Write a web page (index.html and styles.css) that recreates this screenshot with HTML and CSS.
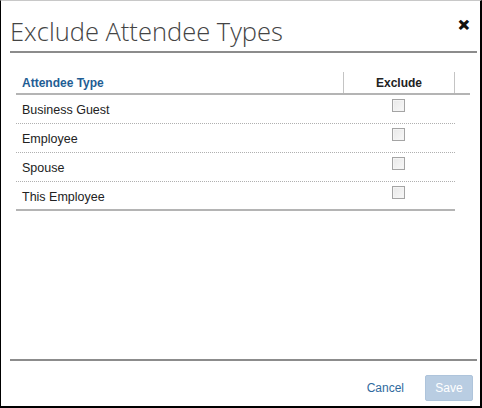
FILE: index.html
```html
<!DOCTYPE html>
<html>
<head>
<meta charset="utf-8">
<link rel="stylesheet" href="styles.css">
</head>
<body>
<div class="dialog">
  <div class="header">
    <h1 class="title">Exclude Attendee Types</h1>
    <span class="close">&#x2715;</span>
  </div>
  <div class="body">
    <div class="grid">
      <div class="grid-head">
        <div class="col-type">Attendee Type</div>
        <div class="col-excl">Exclude</div>
        <div class="col-gutter"></div>
      </div>
      <div class="rows">
        <div class="row"><div class="col-type">Business Guest</div><div class="col-excl"><span class="cb"></span></div></div>
        <div class="row"><div class="col-type">Employee</div><div class="col-excl"><span class="cb"></span></div></div>
        <div class="row"><div class="col-type">Spouse</div><div class="col-excl"><span class="cb"></span></div></div>
        <div class="row last"><div class="col-type">This Employee</div><div class="col-excl"><span class="cb"></span></div></div>
      </div>
    </div>
  </div>
  <div class="footer">
    <a class="cancel">Cancel</a>
    <button class="save">Save</button>
  </div>
</div>
</body>
</html>
```

FILE: styles.css
```css
html, body {
  margin: 0;
  padding: 0;
  background: #fff;
}
.dialog {
  box-sizing: border-box;
  width: 482px;
  height: 408px;
  border-left: 1px solid #000;
  border-top: 1px solid #c8c8c8;
  border-right: 2px solid #000;
  border-bottom: 2px solid #000;
  display: flex;
  flex-direction: column;
  font-family: "Liberation Sans", Arial, sans-serif;
}
.header {
  margin: 0 3px 0 9px;
  height: 50px;
  border-bottom: 2px solid #8c8c8c;
  display: flex;
  align-items: flex-start;
  justify-content: space-between;
}
.title {
  margin: 13px 0 0 0;
  font-family: "Open Sans", sans-serif;
  font-weight: 300;
  font-size: 25.5px;
  line-height: 34px;
  color: #444;
}
.close {
  margin: 16px 7px 0 0;
  font-size: 14px;
  font-weight: bold;
  color: #111;
  line-height: 16px;
  -webkit-text-stroke: 1px #111;
}
.body {
  flex: 1;
  padding: 18px 0 0 15px;
}
.grid {
  width: 454px;
}
.grid-head {
  display: flex;
  height: 22px;
  border-bottom: 2px solid #b4b4b4;
  font-size: 12px;
  font-weight: bold;
  align-items: stretch;
}
.grid-head .col-type {
  width: 321px;
  padding-left: 6px;
  color: #1f5d94;
  border-right: 1px solid #c4c4c4;
  display: flex;
  align-items: center;
  margin-top: 1px;
}
.grid-head .col-excl {
  width: 110px;
  border-right: 1px solid #c4c4c4;
  display: flex;
  align-items: center;
  justify-content: center;
  color: #222;
  margin-top: 1px;
}
.grid-head .col-gutter {
  flex: 1;
}
.rows {
  width: 439px;
}
.row {
  display: flex;
  height: 28px;
  border-bottom: 1px dotted #b0b0b0;
  font-size: 12.5px;
  color: #222;
}
.row.last {
  height: 27px;
  border-bottom: 2px solid #b4b4b4;
}
.row .col-type {
  width: 321px;
  padding-left: 6px;
  padding-top: 2px;
  box-sizing: content-box;
  display: flex;
  align-items: center;
}
.row .col-excl {
  width: 111px;
  display: flex;
  justify-content: center;
  padding-top: 4px;
  box-sizing: border-box;
}
.cb {
  display: block;
  box-sizing: border-box;
  width: 13px;
  height: 13px;
  border: 1px solid #a4a4a4;
  background: linear-gradient(135deg, #e8e8e8, #f8f8f8);
  box-shadow: inset 0 0 0 1px #f4f4f4;
}
.footer {
  margin: 0 3px 0 9px;
  height: 31px;
  border-top: 2px solid #8c8c8c;
  display: flex;
  align-items: flex-start;
  justify-content: flex-end;
  gap: 21px;
  padding-top: 14px;
}
.cancel {
  font-size: 12px;
  line-height: 14px;
  margin-top: 6px;
  color: #2f6a9e;
}
.save {
  width: 48px;
  height: 26px;
  margin-right: 4px;
  border: 1px solid #aec4db;
  border-radius: 2px;
  background: #b9cde2;
  color: #fff;
  font-family: "Liberation Sans", Arial, sans-serif;
  font-size: 12px;
  padding: 0;
}
```
